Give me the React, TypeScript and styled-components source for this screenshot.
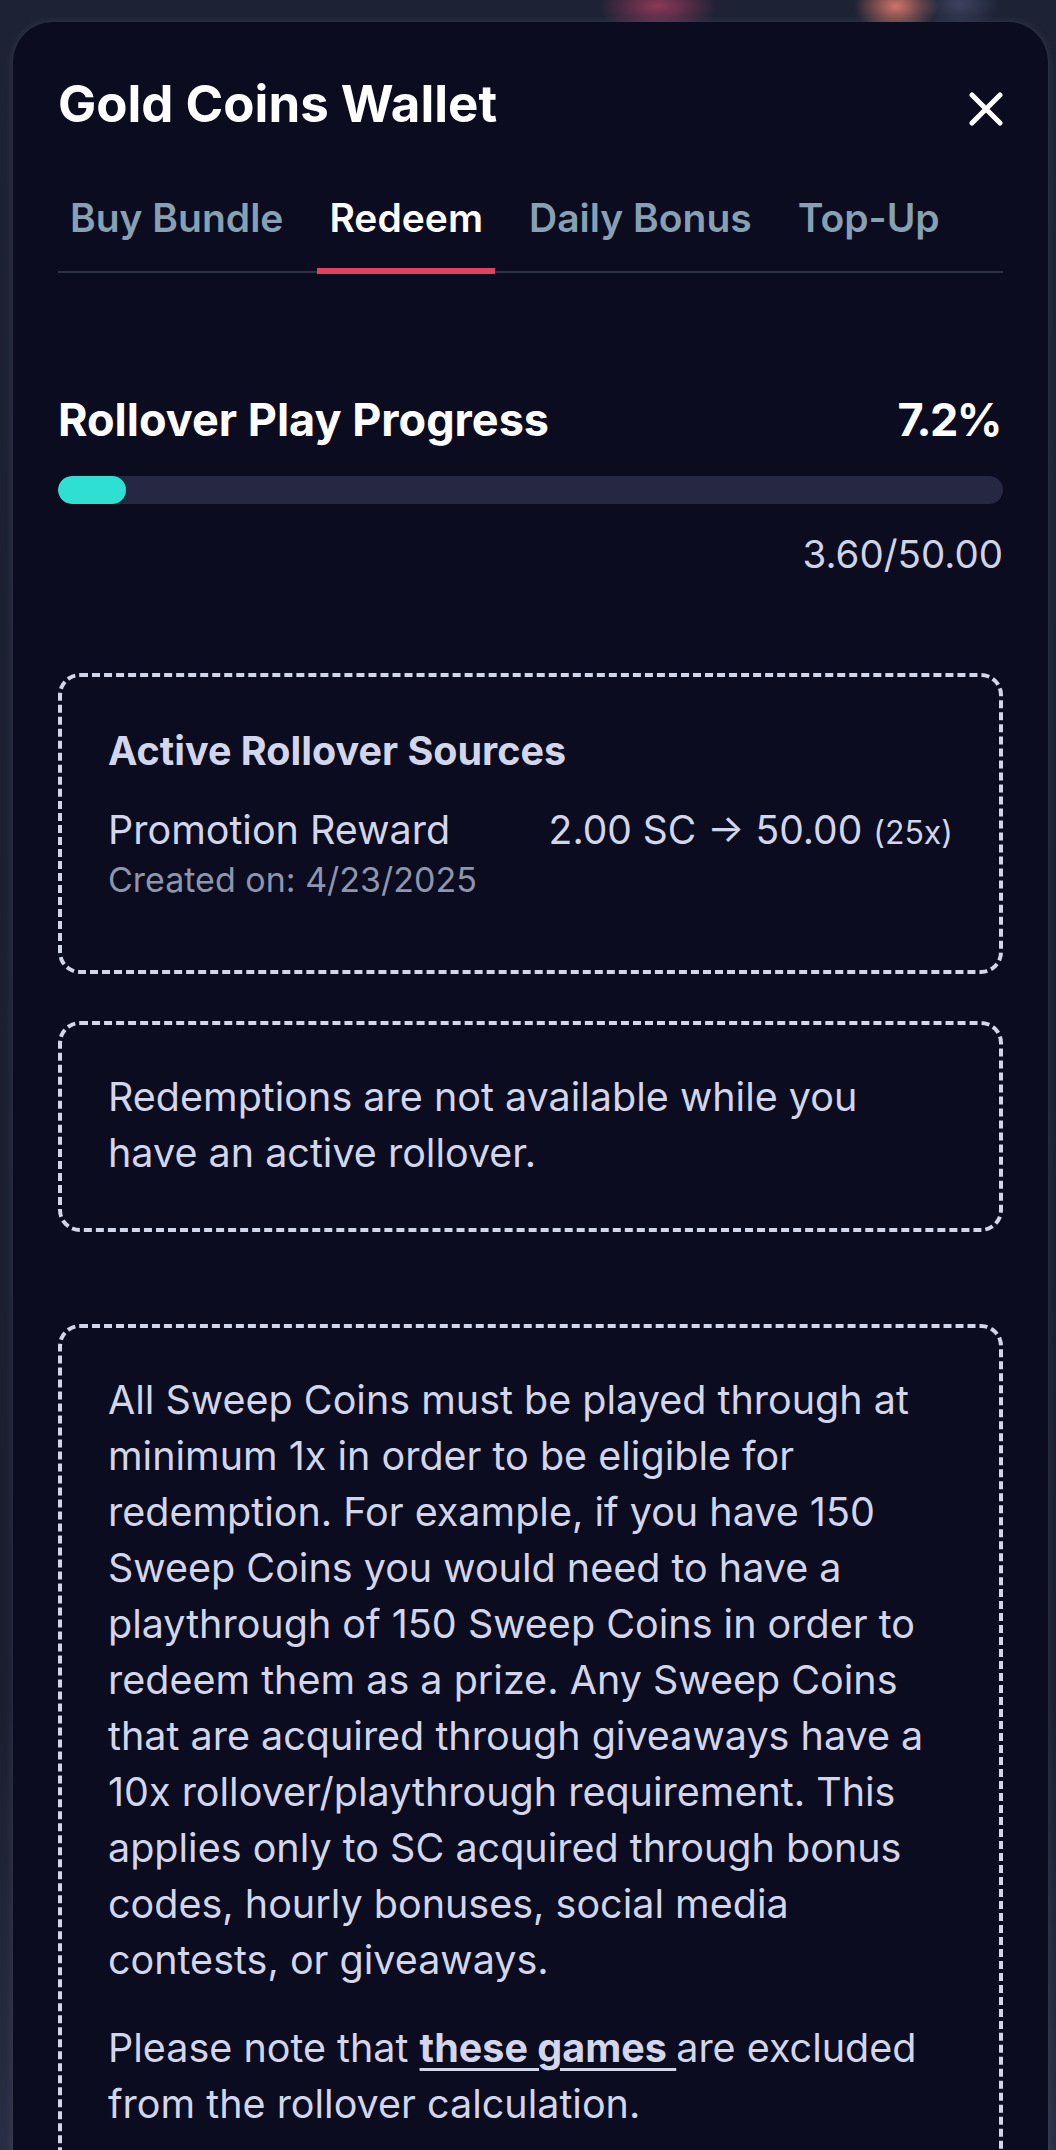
import React from "react";
import styled, { createGlobalStyle } from "styled-components";

const GlobalStyle = createGlobalStyle`
  html, body { margin: 0; padding: 0; }
  body {
    background: #1b1f30;
    font-family: Inter, "Noto Sans", "Liberation Sans", sans-serif;
    -webkit-font-smoothing: antialiased;
  }
  * { box-sizing: border-box; }
`;

const Backdrop = styled.div`
  min-height: 2150px;
  padding: 22px 8px 0 13px;
  overflow: hidden;
  background:
    radial-gradient(60px 28px at 658px 6px, rgba(214, 72, 112, 0.6), transparent),
    radial-gradient(42px 28px at 896px 6px, rgba(240, 132, 112, 0.85), transparent),
    radial-gradient(40px 24px at 960px 4px, rgba(120, 130, 180, 0.35), transparent),
    linear-gradient(#1d2234 0px, #1a1e2f 1700px, #2a2e44 2150px);
`;

const Modal = styled.div`
  width: 1035px;
  min-height: 2128px;
  background: #0b0c1f;
  border-radius: 40px 40px 0 0;
  padding: 51px 45px 0;
  box-shadow: 0 0 8px rgba(200, 210, 240, 0.14);
`;

const Header = styled.div`
  display: flex;
  align-items: center;
  justify-content: space-between;
`;

const Title = styled.h1`
  margin: 0;
  font-size: 51px;
  line-height: 62px;
  font-weight: 700;
  color: #ffffff;
`;

const CloseButton = styled.button`
  width: 34px;
  height: 34px;
  margin-top: 10px;
  padding: 0;
  border: none;
  background: none;
  display: flex;
  align-items: center;
  justify-content: center;
  cursor: pointer;
`;

const TabList = styled.div`
  display: flex;
  gap: 22px;
  margin-top: 60px;
  border-bottom: 2px solid #2a3244;
`;

const Tab = styled.button<{ $active?: boolean }>`
  font-family: inherit;
  font-size: 39px;
  line-height: 46px;
  font-weight: 600;
  padding: 0 12px 27px;
  margin-bottom: -3px;
  border: none;
  border-bottom: 6px solid ${(p) => (p.$active ? "#e2405f" : "transparent")};
  background: none;
  color: ${(p) => (p.$active ? "#ffffff" : "#87a0b2")};
  cursor: pointer;
`;

const ProgressSection = styled.section`
  margin-top: 119px;
`;

const ProgressHeader = styled.div`
  display: flex;
  justify-content: space-between;
  font-size: 45px;
  line-height: 56px;
  font-weight: 700;
  color: #ffffff;
`;

const Percent = styled.span`
  letter-spacing: -1.5px;
  margin-right: 2px;
`;

const Track = styled.div`
  margin-top: 28px;
  height: 28px;
  border-radius: 14px;
  background: #262843;
  overflow: hidden;
`;

const Fill = styled.div`
  height: 100%;
  border-radius: 14px;
  background: #2fe0d2;
`;

const ProgressCount = styled.div`
  margin-top: 22px;
  text-align: right;
  font-size: 38.5px;
  line-height: 56px;
  color: #d0d3e6;
`;

const DashedBox = styled.div<{ $gap: number; $top?: number; $bottom?: number }>`
  margin-top: ${(p) => p.$gap}px;
  border: 4px dashed #d3d6ea;
  border-radius: 22px;
  padding: ${(p) => p.$top ?? 44}px 60px ${(p) => p.$bottom ?? 44}px 46px;
  color: #d3d6ea;
  font-size: 39.5px;
  line-height: 56px;
`;

const SourcesTitle = styled.h3`
  margin: 0;
  font-size: 39.5px;
  line-height: 56px;
  font-weight: 700;
  color: #d3d6ea;
`;

const SourceRow = styled.div`
  display: flex;
  justify-content: space-between;
  align-items: flex-start;
  margin-top: 27px;
  margin-right: -14px;
`;

const SourceInfo = styled.div`
  display: flex;
  flex-direction: column;
`;

const SourceName = styled.span`
  font-size: 39.5px;
  line-height: 48px;
`;

const SourceDate = styled.span`
  font-size: 34px;
  line-height: 52px;
  color: #8f95ad;
`;

const SourceAmount = styled.span`
  font-size: 39px;
  line-height: 48px;
  white-space: nowrap;
`;

const Multiplier = styled.span`
  font-size: 32px;
`;

const Paragraph = styled.p`
  margin: 0;
  & + & {
    margin-top: 32px;
  }
`;

const GamesLink = styled.a`
  font-weight: 700;
  color: inherit;
  text-decoration: underline;
  text-decoration-thickness: 3px;
  text-underline-offset: 6px;
`;

const tabs = ["Buy Bundle", "Redeem", "Daily Bonus", "Top-Up"];

export default function App() {
  const current = 3.6;
  const target = 50;
  const pct = (current / target) * 100;

  return (
    <>
      <GlobalStyle />
      <Backdrop>
        <Modal>
          <Header>
            <Title>Gold Coins Wallet</Title>
            <CloseButton aria-label="Close">
              <svg width="34" height="34" viewBox="0 0 34 34" fill="none">
                <path
                  d="M3 3L31 31M31 3L3 31"
                  stroke="#ffffff"
                  strokeWidth="5"
                  strokeLinecap="round"
                />
              </svg>
            </CloseButton>
          </Header>

          <TabList>
            {tabs.map((t) => (
              <Tab key={t} $active={t === "Redeem"}>
                {t}
              </Tab>
            ))}
          </TabList>

          <ProgressSection>
            <ProgressHeader>
              <span>Rollover Play Progress</span>
              <Percent>{pct.toFixed(1)}%</Percent>
            </ProgressHeader>
            <Track>
              <Fill style={{ width: `${pct}%` }} />
            </Track>
            <ProgressCount>
              {current.toFixed(2)}/{target.toFixed(2)}
            </ProgressCount>
          </ProgressSection>

          <DashedBox $gap={91} $top={46} $bottom={64}>
            <SourcesTitle>Active Rollover Sources</SourcesTitle>
            <SourceRow>
              <SourceInfo>
                <SourceName>Promotion Reward</SourceName>
                <SourceDate>Created on: 4/23/2025</SourceDate>
              </SourceInfo>
              <SourceAmount>
                2.00 SC → 50.00 <Multiplier>(25x)</Multiplier>
              </SourceAmount>
            </SourceRow>
          </DashedBox>

          <DashedBox $gap={47} $bottom={47}>
            Redemptions are not available while you have an active rollover.
          </DashedBox>

          <DashedBox $gap={92}>
            <Paragraph>
              All Sweep Coins must be played through at minimum 1x in order to be
              eligible for redemption. For example, if you have 150 Sweep Coins you
              would need to have a playthrough of 150 Sweep Coins in order to redeem
              them as a prize. Any Sweep Coins that are acquired through giveaways
              have a 10x rollover/playthrough requirement. This applies only to SC
              acquired through bonus codes, hourly bonuses, social media contests, or
              giveaways.
            </Paragraph>
            <Paragraph>
              Please note that <GamesLink href="#">these games </GamesLink>are
              excluded from the rollover calculation.
            </Paragraph>
          </DashedBox>
        </Modal>
      </Backdrop>
    </>
  );
}
